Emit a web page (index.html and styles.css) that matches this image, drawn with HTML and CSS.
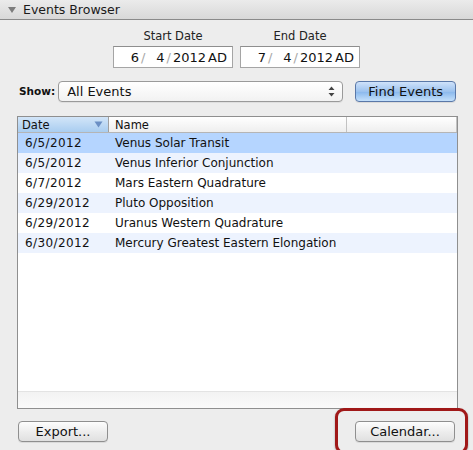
FILE: index.html
```html
<!DOCTYPE html>
<html>
<head>
<meta charset="utf-8">
<link rel="stylesheet" href="styles.css">
</head>
<body>
<div class="panel">
  <div class="titlebar">
    <span class="disclosure"></span>
    <span class="title">Events Browser</span>
  </div>
  <div class="content">
    <div class="dates">
      <div class="date-group">
        <div class="date-label">Start Date</div>
        <div class="date-field"><span>6</span><span class="sep">/</span><span class="pad">4</span><span class="sep">/</span><span>2012</span><span class="era">AD</span></div>
      </div>
      <div class="date-group">
        <div class="date-label">End Date</div>
        <div class="date-field"><span>7</span><span class="sep">/</span><span class="pad">4</span><span class="sep">/</span><span>2012</span><span class="era">AD</span></div>
      </div>
    </div>
    <div class="filter-row">
      <span class="show-label">Show:</span>
      <div class="popup">
        <span>All Events</span>
        <svg class="arrows" width="7" height="11" viewBox="0 0 7 11"><path d="M3.5 0.5L6.5 4H0.5Z M3.5 10.5L6.5 7H0.5Z" fill="#444"/></svg>
      </div>
      <button class="btn btn-default">Find Events</button>
    </div>
    <div class="table">
      <div class="thead">
        <div class="th th-date sorted">Date<svg class="sort" width="9" height="7" viewBox="0 0 9 7"><path d="M0.5 0.5H8.5L4.5 6.5Z" fill="#6b8fc4"/></svg></div>
        <div class="th th-name">Name</div>
        <div class="th th-rest"></div>
      </div>
      <div class="tbody">
        <div class="tr selected"><span class="td-date">6/5/2012</span><span>Venus Solar Transit</span></div>
        <div class="tr alt"><span class="td-date">6/5/2012</span><span>Venus Inferior Conjunction</span></div>
        <div class="tr"><span class="td-date">6/7/2012</span><span>Mars Eastern Quadrature</span></div>
        <div class="tr alt"><span class="td-date">6/29/2012</span><span>Pluto Opposition</span></div>
        <div class="tr"><span class="td-date">6/29/2012</span><span>Uranus Western Quadrature</span></div>
        <div class="tr alt"><span class="td-date">6/30/2012</span><span>Mercury Greatest Eastern Elongation</span></div>
      </div>
      <div class="hscroll"></div>
    </div>
    <div class="actions">
      <button class="btn btn-wide">Export...</button>
      <button class="btn btn-wide">Calendar...</button>
    </div>
  </div>
  <div class="callout"></div>
</div>
</body>
</html>
```

FILE: styles.css
```css
html, body {
  margin: 0;
  padding: 0;
}

body {
  width: 473px;
  height: 450px;
  overflow: hidden;
  background: #ededed;
  font-family: "DejaVu Sans", "Liberation Sans", sans-serif;
  font-size: 12px;
  color: #111;
}

.panel {
  position: relative;
  height: 450px;
}

.titlebar {
  height: 20px;
  box-sizing: border-box;
  display: flex;
  align-items: center;
  gap: 7px;
  padding-left: 8px;
  background: linear-gradient(#ebebeb, #d8d8d8);
  border-bottom: 1px solid #8a8a8a;
  font-size: 12.5px;
  color: #1a1a1a;
}

.disclosure {
  width: 0;
  height: 0;
  border-left: 4px solid transparent;
  border-right: 4px solid transparent;
  border-top: 6px solid #7c7c7c;
  margin-top: 1px;
}

.content {
  padding: 0 15px 0 17px;
}

.dates {
  display: flex;
  justify-content: center;
  gap: 7px;
  padding-top: 8px;
  padding-right: 2px;
}

.date-group {
  display: flex;
  flex-direction: column;
  align-items: center;
  gap: 2px;
}

.date-label {
  font-size: 11.5px;
  color: #222;
  line-height: 16px;
}

.date-field {
  width: 120px;
  height: 22px;
  box-sizing: border-box;
  background: #fff;
  border: 1px solid #a5a5a5;
  border-top-color: #8e8e8e;
  display: flex;
  align-items: center;
  justify-content: flex-end;
  padding-right: 5px;
  font-size: 13px;
  color: #111;
}

.date-field .sep {
  color: #a8a8a8;
  margin: 0 2px;
}

.date-field .pad {
  padding-left: 9px;
}

.date-field .era {
  margin-left: 2px;
}

.filter-row {
  display: flex;
  align-items: center;
  margin-top: 12px;
  height: 22px;
}

.show-label {
  font-weight: bold;
  font-size: 10.5px;
  margin-left: 2px;
  margin-right: 3px;
}

.popup {
  width: 285px;
  height: 21px;
  box-sizing: border-box;
  border: 1px solid #9a9a9a;
  border-radius: 4px;
  background: linear-gradient(#ffffff, #f2f2f2);
  display: flex;
  align-items: center;
  justify-content: space-between;
  padding: 0 7px 0 8px;
  font-size: 13px;
  box-shadow: 0 1px 0 rgba(0,0,0,0.06);
}

.btn {
  font-family: inherit;
  font-size: 13px;
  color: #111;
  height: 21px;
  box-sizing: border-box;
  border: 1px solid #8f8f8f;
  border-radius: 4px;
  background: linear-gradient(#fdfdfd, #ececec 55%, #e0e0e0);
  padding: 0;
  box-shadow: 0 1px 0 rgba(0,0,0,0.08);
}

.btn-default {
  margin-left: 12px;
  width: 101px;
  border-color: #5a78a8;
  background: linear-gradient(#cfe2fa, #9cc2ee 50%, #8ab8ec 52%, #c4e0fb);
}

.table {
  margin-top: 14px;
  width: 441px;
  height: 293px;
  box-sizing: border-box;
  border: 1px solid #8f8f8f;
  background: #fff;
  display: flex;
  flex-direction: column;
}

.thead {
  display: flex;
  height: 16px;
  box-sizing: border-box;
  border-bottom: 1px solid #b5b5b5;
  background: linear-gradient(#ffffff, #eeeeee);
  font-size: 11.5px;
}

.th {
  display: flex;
  align-items: center;
  padding-left: 4px;
  box-sizing: border-box;
  position: relative;
}

.th-date {
  width: 91px;
  justify-content: space-between;
  padding-right: 5px;
  border-right: 1px solid #a0a0a0;
}

.th-date.sorted {
  background: linear-gradient(#d2e5f8, #a9cdf0);
}

.th-name {
  width: 238px;
  padding-left: 6px;
  border-right: 1px solid #c2c2c2;
}

.th-rest {
  flex: 1;
  border-right: 1px solid #c2c2c2;
}

.tbody {
  flex: 1;
  font-size: 12px;
}

.tr {
  display: flex;
  align-items: center;
  height: 20px;
  padding-left: 7px;
  color: #111;
}

.tr.alt {
  background: #edf3fe;
}

.tr.selected {
  background: #b5d5ff;
}

.td-date {
  width: 90px;
  letter-spacing: 0.4px;
}

.hscroll {
  height: 16px;
  border-top: 1px solid #e3e3e3;
  background: linear-gradient(#f2f2f2, #fafafa);
}

.actions {
  display: flex;
  justify-content: space-between;
  margin-top: 12px;
  padding-left: 1px;
  padding-right: 3px;
}

.btn-wide {
  width: 90px;
  height: 21px;
}

.actions .btn-wide:last-child {
  width: 100px;
}

.callout {
  position: absolute;
  left: 335px;
  top: 408px;
  width: 133px;
  height: 46px;
  box-sizing: border-box;
  border: 3px solid #a01818;
  border-radius: 9px;
  box-shadow: 0 1px 2px rgba(0,0,0,0.35);
}
```
